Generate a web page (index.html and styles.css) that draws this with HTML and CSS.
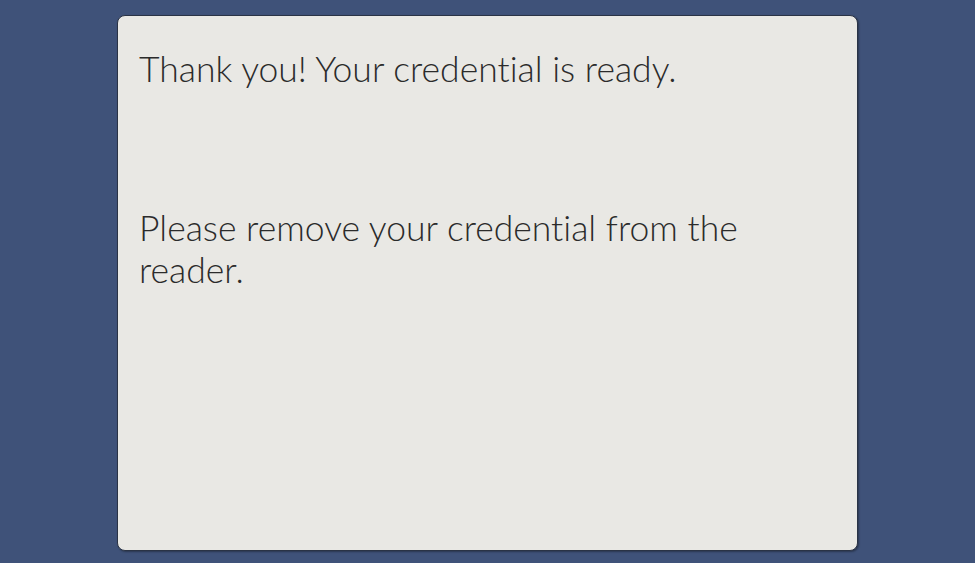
FILE: index.html
```html
<!DOCTYPE html>
<html>
<head>
<meta charset="utf-8">
<link rel="stylesheet" href="styles.css">
</head>
<body>
<main class="card">
  <p class="msg">Thank you! Your credential is ready.</p>
  <p class="msg second">Please remove your credential from the reader.</p>
</main>
</body>
</html>
```
FILE: styles.css
```css
html, body {
  margin: 0;
  padding: 0;
}
body {
  background: #3f5279;
  width: 975px;
  height: 563px;
  overflow: hidden;
  font-family: Lato, "Noto Sans", sans-serif;
  font-weight: 300;
}
.card {
  box-sizing: border-box;
  margin: 15px 0 0 117px;
  width: 741px;
  height: 536px;
  background: #e9e8e4;
  border: 1px solid #2a3345;
  border-radius: 8px;
  box-shadow: 1px 1px 2px rgba(0,0,0,0.35);
  padding: 32px 20px 0 21px;
}
.msg {
  margin: 0;
  max-width: 660px;
  font-size: 35.5px;
  line-height: 42px;
  color: #2b2b2b;
  font-variant-ligatures: none;
  font-feature-settings: "liga" 0, "clig" 0;
}
.second {
  margin-top: 117px;
}
```
